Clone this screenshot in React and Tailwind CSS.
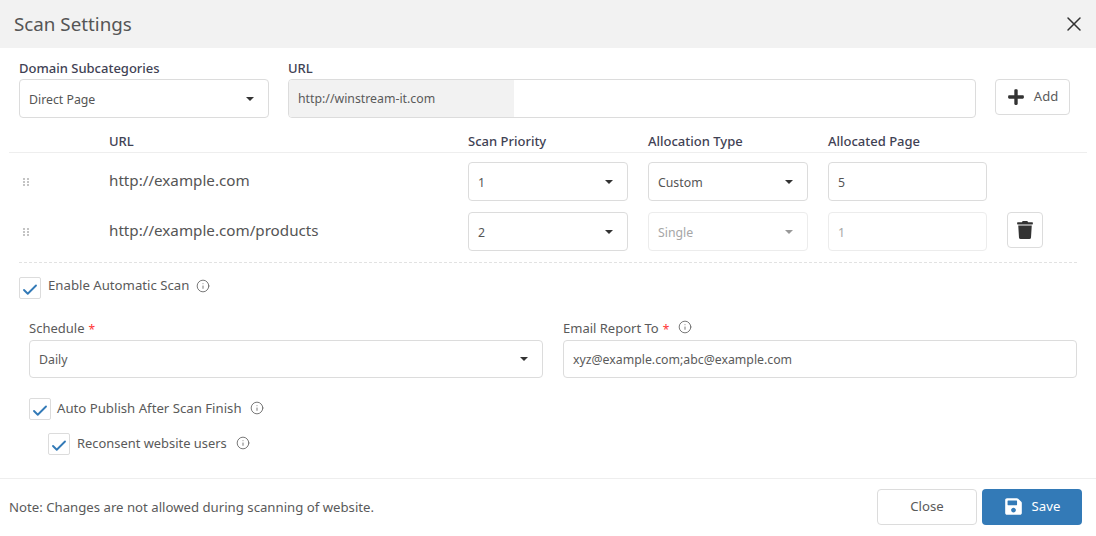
import { X, Info, Check } from 'lucide-react';
import { FaPlus, FaTrash, FaSave } from 'react-icons/fa';

const box = 'border border-[#dcdcdc] rounded-[4px] bg-white flex items-center text-[12.3px]';
const field = `h-[39px] ${box}`;
const heading = 'text-[13px] font-medium leading-[18px] text-[#3f4254]';

function Caret({ muted }) {
  return (
    <svg width="8" height="4" viewBox="0 0 8 4" className="shrink-0">
      <path d="M0 0 L8 0 L4 4 Z" fill={muted ? '#999999' : '#333333'} />
    </svg>
  );
}

function Select({ value, className = '', muted }) {
  return (
    <div className={`${field} justify-between pl-[9px] pr-[14px] ${muted ? 'border-[#ececec] text-[#a6a6a6]' : 'text-[#555555]'} ${className}`}>
      <span className="pt-[3px]">{value}</span>
      <Caret muted={muted} />
    </div>
  );
}

function Grip() {
  const dots = [0, 3, 6];
  return (
    <svg width="6" height="10" viewBox="0 0 6 10">
      {dots.map((y) => (
        <g key={y} fill="#c4c4c4">
          <rect x="0" y={y + 1} width="2" height="2" />
          <rect x="4" y={y + 1} width="2" height="2" />
        </g>
      ))}
    </svg>
  );
}

function Hint() {
  return <Info size={14} strokeWidth={1.5} className="text-[#666666] shrink-0" />;
}

function CheckBox() {
  return (
    <div className="w-[22px] h-[22px] border border-[#dcdcdc] rounded-[2px] flex items-center justify-center shrink-0">
      <Check size={18} strokeWidth={2.5} className="text-[#337ab7] mt-[3px]" />
    </div>
  );
}

function Row({ url, priority, type, pages, disabled }) {
  return (
    <div className="flex items-center pl-[23px]">
      <div className="w-[86px]"><Grip /></div>
      <div className="w-[359px] text-[15.2px] text-[#555555] -mt-[3px]">{url}</div>
      <Select value={priority} className="w-[160px]" />
      <Select value={type} className="w-[160px] ml-[20px]" muted={disabled} />
      <div className={`${field} w-[159px] ml-[20px] px-[9px] ${disabled ? 'border-[#ececec] text-[#a6a6a6]' : 'text-[#555555]'}`}>
        <span className="pt-[3px]">{pages}</span>
      </div>
      {disabled && (
        <button className="w-[36px] h-[36px] ml-[20px] -mt-[3px] border border-[#dcdcdc] rounded-[4px] flex items-center justify-center">
          <FaTrash size={18} className="text-[#333333]" />
        </button>
      )}
    </div>
  );
}

export default function App() {
  return (
    <div className="w-[1096px] h-[536px] bg-white flex flex-col overflow-hidden font-['Noto_Sans','Open_Sans',sans-serif] text-[#5a5a5a]">
      <div className="h-[48px] bg-[#f2f2f2] flex items-center justify-between pl-[14px] pr-[10px] shrink-0">
        <h1 className="text-[18.8px] text-[#555555]">Scan Settings</h1>
        <X size={24} strokeWidth={1.5} className="text-[#333333]" />
      </div>

      <div className="flex pl-[19px] pt-[11px]">
        <div className="w-[250px]">
          <label className={`block h-[20px] ${heading}`}>Domain Subcategories</label>
          <Select value="Direct Page" />
        </div>
        <div className="w-[688px] ml-[19px]">
          <label className={`block h-[20px] ${heading}`}>URL</label>
          <div className={`${field} overflow-hidden`}>
            <div className="w-[225px] h-full bg-[#f2f2f2] flex items-center pl-[9px] pt-[2px]">http://winstream-it.com</div>
          </div>
        </div>
        <button className="w-[75px] h-[36px] ml-[19px] mt-[20px] border border-[#dcdcdc] rounded-[4px] flex items-center justify-center gap-[9px] text-[13px]">
          <FaPlus size={18} className="text-[#333333]" />
          <span>Add</span>
        </button>
      </div>

      <div className={`ml-[9px] mr-[9px] mt-[14px] h-[21px] border-b border-[#eeeeee] flex ${heading}`}>
        <span className="ml-[100px] w-[359px]">URL</span>
        <span className="w-[180px]">Scan Priority</span>
        <span className="w-[180px]">Allocation Type</span>
        <span>Allocated Page</span>
      </div>

      <div className="flex flex-col gap-[11px] mt-[9px]">
        <Row url="http://example.com" priority="1" type="Custom" pages="5" />
        <Row url="http://example.com/products" priority="2" type="Single" pages="1" disabled />
      </div>

      <div className="mx-[19px] mt-[11px] border-t border-dashed border-[#e2e2e2]" />

      <div className="flex items-center gap-[7px] ml-[19px] mt-[14px] text-[13.2px]">
        <CheckBox />
        <span className="-mt-[4px]">Enable Automatic Scan</span>
        <span className="-mt-[5px]"><Hint /></span>
      </div>

      <div className="flex ml-[29px] mt-[19px] text-[13px]">
        <div className="w-[514px]">
          <div className="h-[20px] mb-[2px] flex items-center gap-[4px] leading-[18px]">Schedule <span className="text-[12px] text-[#ff3333] mt-[3px]">*</span></div>
          <div className={`${box} h-[38px] justify-between pl-[9px] pr-[14px]`}>
            <span className="pt-[2px]">Daily</span>
            <Caret />
          </div>
        </div>
        <div className="w-[514px] ml-[20px]">
          <div className="h-[20px] mb-[2px] flex items-center gap-[4px] leading-[18px]">
            Email Report To <span className="text-[12px] text-[#ff3333] mt-[3px]">*</span>
            <span className="ml-[5px] -mt-[2px]"><Hint /></span>
          </div>
          <div className={`${box} h-[38px] pl-[9px]`}>
            <span className="pt-[2px]">xyz@example.com;abc@example.com</span>
          </div>
        </div>
      </div>

      <div className="flex items-center gap-[6px] ml-[29px] mt-[20px] text-[13.2px]">
        <CheckBox />
        <span className="-mt-[1px]">Auto Publish After Scan Finish</span>
        <span className="ml-[2px] -mt-[3px]"><Hint /></span>
      </div>
      <div className="flex items-center gap-[7px] ml-[48px] mt-[13px] text-[12.9px]">
        <CheckBox />
        <span className="-mt-[1px]">Reconsent website users</span>
        <span className="ml-[2px] -mt-[3px]"><Hint /></span>
      </div>

      <div className="mt-auto h-[58px] border-t border-[#eeeeee] flex items-center justify-between pl-[9px] pr-[14px] text-[13.2px]">
        <span className="mt-[1px]">Note: Changes are not allowed during scanning of website.</span>
        <div className="flex gap-[5px] mb-[2px]">
          <button className="w-[100px] h-[36px] border border-[#dcdcdc] rounded-[4px]">Close</button>
          <button className="w-[100px] h-[36px] bg-[#337ab7] text-white rounded-[4px] flex items-center justify-center gap-[9px]">
            <FaSave size={19} />
            <span>Save</span>
          </button>
        </div>
      </div>
    </div>
  );
}
